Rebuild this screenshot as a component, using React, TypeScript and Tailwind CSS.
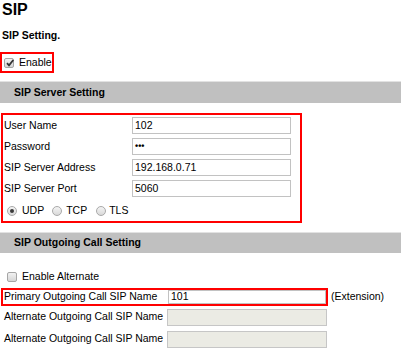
import React from "react";

function CheckBox({ checked }: { checked?: boolean }) {
  return (
    <div className="relative w-[10px] h-[10px] rounded-[2px] border border-[#a6a6a6] bg-gradient-to-b from-[#f2f2f2] to-[#d6d6d6] shrink-0">
      {checked && (
        <svg viewBox="0 0 10 10" className="absolute left-[0px] top-[-1px] w-[10px] h-[10px]">
          <path d="M2 5.2 L4 7.3 L8.3 2" fill="none" stroke="#333" strokeWidth="1.8" />
        </svg>
      )}
    </div>
  );
}

function Radio({ checked }: { checked?: boolean }) {
  return (
    <div className="flex items-center justify-center w-[10px] h-[10px] rounded-full border border-[#a9a9a9] bg-gradient-to-b from-[#f4f4f4] to-[#d9d9d9] shrink-0">
      {checked && <div className="w-[4px] h-[4px] rounded-full bg-[#3a3a3a]" />}
    </div>
  );
}

function Field({ value, small }: { value: string; small?: boolean }) {
  return (
    <div className="flex items-center w-[159px] h-[17px] border border-[#c2c2c2] bg-white pl-[2px]">
      <span className={small ? "text-[9px] font-bold tracking-[0px]" : ""}>{value}</span>
    </div>
  );
}

export default function App() {
  return (
    <div
      className="w-[401px] h-[355px] bg-white text-[#000] text-[10.5px] overflow-hidden flex flex-col"
      style={{ fontFamily: '"Liberation Sans", Arial, sans-serif' }}
    >
      <div className="h-[20px] pl-[2px] pt-[1px] text-[16px] leading-[18px] font-bold">SIP</div>
      <div className="mt-[8px] h-[16px] pl-[2px] flex items-center font-bold">SIP Setting.</div>
      <div className="mt-[8px] h-[21px] w-[54px] border-2 border-[#ff0000] flex items-center pl-[2px] gap-[5px]">
        <CheckBox checked />
        <span className="text-[10.5px]">Enable</span>
      </div>
      <div className="mt-[8px] h-[22px] bg-[#c0c0c0] border-t border-[#e2e2e2] flex items-center pl-[14px] font-bold">
        SIP Server Setting
      </div>
      <div className="mt-[10px] ml-[1px] w-[301px] h-[110px] border-2 border-[#ff0000] flex flex-col pl-[1px]">
        {[
          ["User Name", "102", false],
          ["Password", "•••", true],
          ["SIP Server Address", "192.168.0.71", false],
          ["SIP Server Port", "5060", false],
        ].map(([label, value, small]) => (
          <div key={label as string} className="h-[21px] flex items-center">
            <span className="w-[128px]">{label as string}</span>
            <Field value={value as string} small={small as boolean} />
          </div>
        ))}
        <div className="h-[22px] pt-[2px] flex items-center pl-[3px]">
          <Radio checked />
          <span className="ml-[5px]">UDP</span>
          <div className="ml-[8px]">
            <Radio />
          </div>
          <span className="ml-[4px]">TCP</span>
          <div className="ml-[9px]">
            <Radio />
          </div>
          <span className="ml-[3px]">TLS</span>
        </div>
      </div>
      <div className="mt-[9px] h-[21px] bg-[#c0c0c0] border-t border-[#e2e2e2] flex items-center pl-[14px] font-bold">
        SIP Outgoing Call Setting
      </div>
      <div className="mt-[15px] h-[18px] flex items-center pl-[7px] gap-[5px]">
        <CheckBox />
        <span>Enable Alternate</span>
      </div>
      <div className="mt-[2px] flex items-center">
        <div className="ml-[1px] w-[327px] h-[18px] border-2 border-[#ff0000] flex items-center pl-[1px]">
          <span className="w-[164px]">Primary Outgoing Call SIP Name</span>
          <div className="flex items-center w-[158px] h-[14px] border border-[#c2c2c2] bg-white pl-[2px]">101</div>
        </div>
        <span className="ml-[3px]">(Extension)</span>
      </div>
      {[0, 1].map((i) => (
        <div key={i} className="h-[22px] flex items-center pl-[4px]">
          <span className="w-[163px]">Alternate Outgoing Call SIP Name</span>
          <div className="w-[160px] h-[17px] border border-[#c6c6c6] bg-[#ebebe4]" />
        </div>
      ))}
    </div>
  );
}
